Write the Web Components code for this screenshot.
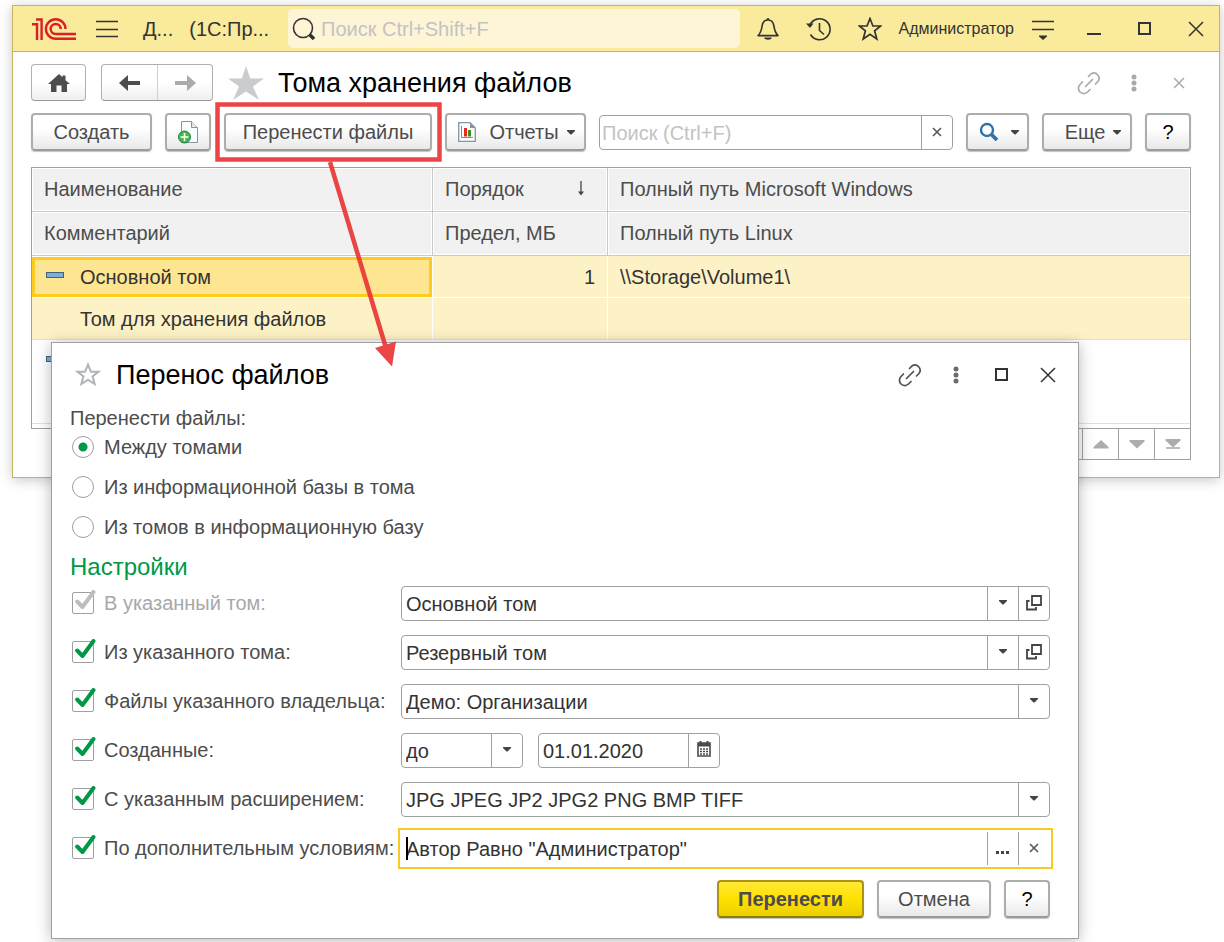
<!DOCTYPE html>
<html lang="ru">
<head>
<meta charset="utf-8">
<title>Тома хранения файлов</title>
<style>
  html, body { margin: 0; background: #fff; }
  body { font: 20px/24px "Liberation Sans", Arial, sans-serif; color: #4c4c4c; position: relative; min-height: 100vh; overflow: hidden; }
</style>
</head>
<body>
<volumes-window></volumes-window>
<transfer-dialog></transfer-dialog>
<callout-arrow></callout-arrow>

<script>
const ICONS = {
  logo: [46, 24, '<g fill="none" stroke="#db1f26" stroke-width="2.400"><path d="M4 2.500H9.600V23M0 7.200H5V23"/><path d="M33.500 12A9.800 9.800 0 1 0 23.700 21.800H44M28.700 12A5 5 0 1 0 23.700 17H44"/></g>'],
  burger: [22, 18, '<path d="M0 1.5H22M0 9.5H22M0 16.5H22" stroke="#333" stroke-width="1.6"/>'],
  search: [24, 24, '<circle cx="11" cy="11" r="9.5" fill="none" stroke="#333" stroke-width="1.6"/><path d="M17.5 17.5L22 22" stroke="#333" stroke-width="3.6"/>'],
  bell: [24, 24, '<path d="M2 18.6C5 16 5.5 13 6.200 8.500C6.800 5 9 3 12 3S17.200 5 17.800 8.500C18.500 13 19 16 22 18.600Z" fill="none" stroke="#333" stroke-width="1.600" stroke-linejoin="round"/><path d="M10.500 3a1.500 2 0 0 1 3 0zM8 20.500h8c-1 3-7 3-8 0z" fill="#333"/>'],
  history: [26, 24, '<path d="M4 8A10.500 10.500 0 1 1 4.500 17.500" fill="none" stroke="#333" stroke-width="1.600"/><path d="M0 6.500H7.500L4 11z" fill="#333"/><path d="M13.500 6V13.500L18 17.500" fill="none" stroke="#333" stroke-width="1.600"/>'],
  star: [24, 24, '<path d="M12 1.500L14.900 9H22.700L16.600 13.800L18.800 22L12 17.400L5.200 22L7.400 13.800L1.300 9H9.100Z" fill="none" stroke="#333" stroke-width="1.700"/>'],
  settings: [22, 22, '<path d="M0 3.500H22M0 11.500H22" stroke="#333" stroke-width="1.700"/><path d="M7 17.500H15V18.500L11 22L7 18.500z" fill="#333"/>'],
  minimize: [14, 12, '<path d="M0 11H14" stroke="#333" stroke-width="2"/>'],
  maximize: [14, 14, '<rect x="1" y="1" width="11" height="11" fill="none" stroke="#333" stroke-width="2"/>'],
  close: [16, 16, '<path d="M1 1L15 15M15 1L1 15" stroke="#333" stroke-width="1.500"/>'],
  closeGrey: [12, 12, '<path d="M1 1L11 11M11 1L1 11" stroke="#aaa" stroke-width="1.500"/>'],
  clear: [10, 10, '<path d="M1 1L9 9M9 1L1 9" stroke="#555" stroke-width="1.600"/>'],
  home: [22, 18, '<path d="M11 0L14.500 3.300V1.500H17.500V6.200L22 10H19V18H13.500V11.500H8.500V18H3V10H0Z" fill="#4d4d4d"/>'],
  back: [22, 16, '<path d="M0 8L9 0V6H21V10H9V16Z" fill="#4d4d4d"/>'],
  forward: [22, 16, '<path d="M22 8L13 0V6H1V10H13V16Z" fill="#ababab"/>'],
  starFilled: [36, 34, '<path d="M18 0L22.200 12.500H36L25 20.500L31 34L18 25.500L5 34L11 20.500L0 12.500H13.800Z" fill="#cbccce"/>'],
  starOutline: [26, 25, '<path d="M13 2.500L15.900 9.700H23.500L17.500 14.400L19.700 22L13 17.600L6.300 22L8.500 14.400L2.500 9.700H10.100Z" fill="none" stroke="#b0b5bc" stroke-width="2"/>'],
  link: [24, 24, '<g fill="none" stroke="#505050" stroke-width="1.700" stroke-linecap="round"><path d="M8.500 15.500L15.500 8.500"/><path d="M11.500 5.500L14 3A5.200 5.200 0 0 1 21 10.500L18.500 13"/><path d="M5.500 11L3 13.500A5.200 5.200 0 0 0 10.500 21L13 18.500"/></g>'],
  linkGrey: [24, 24, '<g fill="none" stroke="#aaa" stroke-width="1.700" stroke-linecap="round"><path d="M8.500 15.500L15.500 8.500"/><path d="M11.500 5.500L14 3A5.200 5.200 0 0 1 21 10.500L18.500 13"/><path d="M5.500 11L3 13.500A5.200 5.200 0 0 0 10.500 21L13 18.500"/></g>'],
  dots: [6, 18, '<g fill="#6b6b6b"><circle cx="3" cy="3" r="2.500"/><circle cx="3" cy="9" r="2.500"/><circle cx="3" cy="15" r="2.500"/></g>'],
  dotsGrey: [6, 18, '<g fill="#a8a8a8"><circle cx="3" cy="3" r="2.500"/><circle cx="3" cy="9" r="2.500"/><circle cx="3" cy="15" r="2.500"/></g>'],
  newDoc: [22, 24, '<path d="M4.500 1.500H14.500L20.500 7.500V22.500H4.500Z" fill="#fbfcfd" stroke="#8494a4"/><path d="M14.500 1.500V7.500H20.500" fill="#e4e9ee" stroke="#8494a4"/><circle cx="7.500" cy="17" r="6" fill="#49b54d" stroke="#21863b"/><path d="M3.500 17H11.500M7.500 13V21" stroke="#fff" stroke-width="1.600"/>'],
  report: [18, 20, '<path d="M.7.7H12L17.300 6V19.300H.7Z" fill="#fafcfd" stroke="#8494a4" stroke-width="1.300"/><path d="M12 .7V6H17.300" fill="#8494a4"/><path d="M3.500 4V15.500H15" fill="none" stroke="#888"/><rect x="6" y="6" width="3" height="8.500" fill="#e52b20"/><rect x="10" y="8" width="3" height="6.500" fill="#3c8f10"/>'],
  magnifier: [20, 20, '<circle cx="8" cy="8" r="6" fill="none" stroke="#2e72a8" stroke-width="2.400"/><path d="M12.500 12.500L18 18" stroke="#2e72a8" stroke-width="3.800"/>'],
  caret: [8, 5, '<path d="M0 0H8V1L4.500 4.500H3.500L0 1Z" fill="#444"/>'],
  open: [16, 16, '<path d="M6 1H15V10H6Z" fill="none" stroke="#444" stroke-width="1.800"/><path d="M3.500 6H1V14.500H10V12" fill="none" stroke="#444" stroke-width="1.800"/>'],
  calendar: [14, 18, '<path d="M1 2H13V15H1Z" fill="none" stroke="#4a4a4a" stroke-width="1.600"/><path d="M1 2H13V5.500H1Z" fill="#4a4a4a"/><path d="M3.500 0V3M10.500 0V3" stroke="#4a4a4a" stroke-width="2"/><path d="M3 8H11.500M3 10.500H11.500M3 13H11.500" stroke="#4a4a4a" stroke-width="1.500" stroke-dasharray="2 1"/>'],
  ellipsis: [14, 12, '<path d="M0 9H3V12H0ZM5 9H8V12H5ZM10 9H13V12H10Z" fill="#444"/>'],
  sort: [8, 15, '<path d="M4 0V12" stroke="#444" stroke-width="1.300"/><path d="M1 10.500H7L4 14.500Z" fill="#444"/>'],
  up: [16, 9, '<path d="M8 0L15.500 7V8.500H.5V7Z" fill="#adadad"/>'],
  down: [16, 9, '<path d="M8 8.500L15.500 1.500V0H.5V1.500Z" fill="#adadad"/>'],
  last: [16, 10, '<path d="M8 8.500L15.500 1.500V0H.5V1.500Z" fill="#adadad"/><path d="M1 9H15" stroke="#adadad" stroke-width="1.600"/>'],
  tick: [22, 20, '<path d="M3.200 11.500L8.500 17L19.500 2" fill="none" stroke="currentColor" stroke-width="4" stroke-linecap="round" stroke-linejoin="round"/>']
};

class UiIcon extends HTMLElement {
  constructor() {
    super();
    this.attachShadow({ mode: 'open' });
  }
  connectedCallback() {
    const [w, h, body] = ICONS[this.getAttribute('name')];
    this.shadowRoot.innerHTML = `
      <style>:host{display:inline-flex;flex:none} svg{display:block}</style>
      <svg width="${w}" height="${h}" viewBox="0 0 ${w} ${h}" aria-hidden="true">${body}</svg>`;
  }
}
customElements.define('ui-icon', UiIcon);

class PushButton extends HTMLElement {
  constructor() {
    super();
    this.attachShadow({ mode: 'open' }).innerHTML = `
      <style>
        :host{display:block;flex:none}
        button{display:flex;align-items:center;justify-content:center;width:100%;height:38px;margin:0 0 1px;padding:0;
          box-sizing:border-box;font:inherit;color:#4c4c4c;border:2px solid #adadad;border-bottom-color:#9b9b9b;border-radius:4px;
          background:linear-gradient(#fff 40%,#e9e9e9);box-shadow:0 1px 1px #c4c4c4}
        :host([primary]) button{font-weight:bold;border-color:#ab9412;border-bottom-color:#8f7b00;
          background:linear-gradient(#ffe838,#ffe100 50%,#ead000)}
        :host([help]) button{color:#000}
      </style>
      <button type="button"><slot></slot></button>`;
  }
  connectedCallback() {
    const label = this.getAttribute('label');
    if (label) this.shadowRoot.querySelector('button').setAttribute('aria-label', label);
  }
}
customElements.define('push-button', PushButton);

/* Borderless button that holds one icon. */
class IconButton extends HTMLElement {
  constructor() { super(); this.attachShadow({ mode: 'open' }); }
  connectedCallback() {
    this.shadowRoot.innerHTML = `
      <style>
        :host{display:block;flex:none;width:40px}
        button{display:flex;align-items:center;justify-content:center;width:100%;height:32px;margin:0;padding:0;border:0;background:none}
      </style>
      <button type="button" aria-label="${this.getAttribute('label')}"><ui-icon name="${this.getAttribute('icon')}"></ui-icon></button>`;
  }
}
customElements.define('icon-button', IconButton);

/* Bordered input: kind = select | text, buttons = icons of the trailing cells. */
class EntryField extends HTMLElement {
  constructor() { super(); this.attachShadow({ mode: 'open' }); }
  connectedCallback() {
    const kind = this.getAttribute('kind') || 'text';
    const value = this.getAttribute('value') || '';
    const label = this.getAttribute('label');
    const hint = this.getAttribute('placeholder') || '';
    const cells = (this.getAttribute('buttons') || '').split(' ').filter(Boolean);
    const names = { open: 'Открыть', calendar: 'Календарь', ellipsis: 'Выбрать', clear: 'Очистить' };
    const control = kind === 'select'
      ? `<select aria-label="${label}"><option>${value}</option></select><span class="cell arrow"><ui-icon name="caret"></ui-icon></span>`
      : `<input type="text" aria-label="${label}" placeholder="${hint}">`;
    this.shadowRoot.innerHTML = `
      <style>
        :host{display:block;min-width:0}
        .box{display:flex;position:relative;height:33px;border:1px solid #a0a0a0;border-radius:4px;background:#fff}
        .main{display:grid;grid-template-columns:1fr auto;flex:1;min-width:0}
        select,input{grid-row:1;grid-column:1/3;min-width:0;width:100%;height:33px;box-sizing:border-box;margin:0;border:0;outline:0;
          padding:0 4px;background:none;font:inherit;color:#333;appearance:none}
        input{padding:2px 4px 0}
        input::placeholder{color:#c3c3c3;opacity:1}
        .cell{display:flex;align-items:center;justify-content:center;width:31px;box-sizing:border-box;margin:0;padding:0 0 2px;
          border:0;border-left:1px solid #a0a0a0;background:none}
        .arrow{grid-row:1;grid-column:2;pointer-events:none}
        :host([placeholder]) input{padding-left:2px}
        :host([active]) .box{border-color:transparent}
        :host([active]) .box::before{content:"";position:absolute;inset:-4px;border:2px solid #f9ca24}
        :host([active]) .box::after{content:"";position:absolute;left:4px;top:5px;width:2px;height:23px;background:#000}
      </style>
      <div class="box"><div class="main">${control}</div>
        ${cells.map(c => `<button class="cell" type="button" aria-label="${names[c]}"><ui-icon name="${c}"></ui-icon></button>`).join('')}
      </div>`;
    if (kind !== 'select') this.shadowRoot.querySelector('input').value = value;
  }
}
customElements.define('entry-field', EntryField);

class CheckLabel extends HTMLElement {
  constructor() { super(); this.attachShadow({ mode: 'open' }); }
  connectedCallback() {
    this.shadowRoot.innerHTML = `
      <style>
        :host{display:block}
        label{display:flex;align-items:center;gap:10px;padding:0 0 2px 2px;color:#4c4c4c;white-space:nowrap}
        .mark{position:relative;width:22px;height:22px;flex:none;color:#009846}
        input{appearance:none;display:block;width:22px;height:22px;margin:0;box-sizing:border-box;border:1px solid #a0a0a0;border-radius:2px}
        ui-icon{position:absolute;left:2px;top:-2px;pointer-events:none}
        :host([disabled]) label{color:#a8a8a8}
        :host([disabled]) .mark{color:#bdbdbd}
      </style>
      <label><span class="mark"><input type="checkbox" checked ${this.hasAttribute('disabled') ? 'disabled' : ''}><ui-icon name="tick"></ui-icon></span><slot></slot></label>`;
  }
}
customElements.define('check-label', CheckLabel);

class VolumesTable extends HTMLElement {
  constructor() {
    super();
    this.attachShadow({ mode: 'open' }).innerHTML = `
      <style>
        :host{display:block}
        .frame{border:1px solid #a0a0a0;padding-bottom:4px}
        table{width:100%;table-layout:fixed;border-collapse:separate;border-spacing:0}
        col.name{width:401px} col.order{width:175px}
        th,td{box-sizing:border-box;padding:0 12px;text-align:left;font-weight:normal;white-space:nowrap}
        th{height:44px;padding-bottom:2px;background:#f1f1f1;border-right:1px solid #c9c9c9;border-bottom:1px solid #c9c9c9;box-shadow:inset 0 0 0 1px #fff}
        th:last-child,td:last-child{border-right:0}
        .sorted{display:flex;justify-content:space-between;align-items:center;padding-right:10px}
        td{height:42px;color:#333;background:#fdf1c6;border-right:1px solid #fff;border-bottom:1px solid #fff}
        td.num{text-align:right}
        td.name{padding-left:48px}
        tr.second td{border-bottom-color:#e0e0e0}
        tr.first td.item{padding-left:14px}
        .item div{display:flex;align-items:center;gap:16px}
        .item i{width:16px;height:4px;border:1px solid #426379;background:#7eaed8;margin-bottom:4px}
        td.current{background:#fee591;box-shadow:inset 0 0 0 3px #fbcb20;border-top:1px solid #fff}
        tbody.plain td{background:#fff}
        .pager{display:flex;justify-content:flex-end}
        .pager button{width:37px;height:32px;margin:-1px 0 0 -1px;padding:0;border:1px solid #a0a0a0;background:#fff;display:flex;align-items:center;justify-content:center}
      </style>
      <div class="frame">
        <table>
          <colgroup><col class="name"><col class="order"><col></colgroup>
          <thead>
            <tr><th>Наименование</th><th><div class="sorted">Порядок<ui-icon name="sort"></ui-icon></div></th><th>Полный путь Microsoft Windows</th></tr>
            <tr><th>Комментарий</th><th>Предел, МБ</th><th>Полный путь Linux</th></tr>
          </thead>
          <tbody>
            <tr class="first"><td class="item current"><div><i></i>Основной том</div></td><td class="num">1</td><td>\\\\Storage\\Volume1\\</td></tr>
            <tr class="second"><td class="name">Том для хранения файлов</td><td></td><td></td></tr>
          </tbody>
          <tbody class="plain">
            <tr class="first"><td class="item"><div><i></i></div></td><td></td><td></td></tr>
            <tr class="second"><td></td><td></td><td></td></tr>
          </tbody>
        </table>
      </div>
      <div class="pager">
        <button type="button" aria-label="В начало"></button>
        <button type="button" aria-label="Вверх"><ui-icon name="up"></ui-icon></button>
        <button type="button" aria-label="Вниз"><ui-icon name="down"></ui-icon></button>
        <button type="button" aria-label="В конец"><ui-icon name="last"></ui-icon></button>
      </div>`;
  }
}
customElements.define('volumes-table', VolumesTable);

class VolumesWindow extends HTMLElement {
  constructor() {
    super();
    this.attachShadow({ mode: 'open' }).innerHTML = `
      <style>
        :host{display:block;margin:5px 4px 0 12px;border:1px solid #c6b45e;background:#fff;box-shadow:0 2px 12px rgba(0,0,0,.22)}
        :host{position:relative}
        header{display:flex;align-items:center;height:45px;background:#faea9c;border-bottom:1px solid #c6b45e;padding:0 3px 0 19px;box-sizing:content-box}
        .menu{margin:0 16px 0 9px}
        .caption{display:flex;gap:16px;width:137px;color:#333;white-space:nowrap}
        .search{display:flex;align-items:center;gap:5px;flex:1;min-width:0;height:39px;margin:0 8px;padding-left:4px;border-radius:5px;background:#fdf5d6}
        .search input{flex:1;min-width:0;border:0;margin:0;padding:0;outline:0;background:none;font:inherit}
        input::placeholder{color:#c3c3c3;opacity:1}
        .tools{display:flex;align-items:center;gap:11px}
        .tools a{margin:0 -2px;color:#333;text-decoration:none;font-size:16px;white-space:nowrap}
        main{padding:12px 28px 17px 18px}
        .head{display:flex;align-items:center;height:37px}
        .nav{display:flex;border:1px solid #b0b0b0;border-bottom-color:#999;border-radius:4px;box-sizing:border-box;height:37px;background:linear-gradient(#fff 50%,#efefef)}
        .nav button{display:flex;align-items:center;justify-content:center;width:55px;margin:0;padding:0;border:0;background:none}
        .nav button + button{border-left:1px solid #d0d0d0}
        .home{margin-right:15px;width:55px}
        .home button{width:100%}
        h1{flex:1;margin:0 0 0 14px;font-size:27px;line-height:32px;font-weight:normal;color:#000;white-space:nowrap}
        .fav{margin-left:15px;width:36px}
        .links{display:flex;align-items:center;gap:5px;margin-right:-8px}
        .bar{display:flex;align-items:center;gap:13px;margin:12px 0 15px;height:39px}
        .bar entry-field{flex:1}
        .create{width:121px}.copy{width:46px}.move{width:208px}.reports{width:141px}.find{width:63px}.more{width:90px}.help{width:46px}
        .pack{display:flex;align-items:center}
        .reports .pack{gap:13px;padding-left:2px}
        .gap{margin-left:8px}
        .find .pack{gap:12px;padding-left:2px}
        .more .pack{gap:8px;padding-left:12px}
      </style>
      <header>
        <ui-icon name="logo"></ui-icon>
        <icon-button class="menu" icon="burger" label="Меню"></icon-button>
        <div class="caption"><span>Д...</span><span>(1С:Пр...</span></div>
        <div class="search"><ui-icon name="search"></ui-icon><input type="search" aria-label="Поиск" placeholder="Поиск Ctrl+Shift+F"></div>
        <div class="tools">
          <icon-button icon="bell" label="Оповещения"></icon-button>
          <icon-button icon="history" label="История"></icon-button>
          <icon-button icon="star" label="Избранное"></icon-button>
          <a href="#">Администратор</a>
          <icon-button icon="settings" label="Настройки"></icon-button>
          <icon-button icon="minimize" label="Свернуть"></icon-button>
          <icon-button icon="maximize" label="Развернуть"></icon-button>
          <icon-button icon="close" label="Закрыть окно"></icon-button>
        </div>
      </header>
      <main>
        <div class="head">
          <div class="nav home"><button type="button" aria-label="Домой"><ui-icon name="home"></ui-icon></button></div>
          <div class="nav"><button type="button" aria-label="Назад"><ui-icon name="back"></ui-icon></button><button type="button" aria-label="Вперед"><ui-icon name="forward"></ui-icon></button></div>
          <ui-icon class="fav" name="starFilled"></ui-icon>
          <h1>Тома хранения файлов</h1>
          <div class="links">
            <icon-button icon="linkGrey" label="Ссылка"></icon-button>
            <icon-button icon="dotsGrey" label="Еще"></icon-button>
            <icon-button icon="closeGrey" label="Закрыть"></icon-button>
          </div>
        </div>
        <div class="bar">
          <push-button class="create">Создать</push-button>
          <push-button class="copy" label="Скопировать"><ui-icon name="newDoc"></ui-icon></push-button>
          <push-button class="move">Перенести файлы</push-button>
          <push-button class="reports"><span class="pack"><ui-icon name="report"></ui-icon>Отчеты</span><ui-icon class="gap" name="caret"></ui-icon></push-button>
          <entry-field label="Поиск" placeholder="Поиск (Ctrl+F)" buttons="clear"></entry-field>
          <push-button class="find" label="Найти"><span class="pack"><ui-icon name="magnifier"></ui-icon><ui-icon name="caret"></ui-icon></span></push-button>
          <push-button class="more"><span class="pack">Еще<ui-icon name="caret"></ui-icon></span></push-button>
          <push-button class="help" help>?</push-button>
        </div>
        <volumes-table></volumes-table>
      </main>`;
  }
}
customElements.define('volumes-window', VolumesWindow);

class TransferDialog extends HTMLElement {
  constructor() {
    super();
    this.attachShadow({ mode: 'open' }).innerHTML = `
      <style>
        :host{display:block;position:absolute;left:51px;right:145px;top:342px;box-sizing:border-box;border:1px solid #a0a0a0;background:#fff;
          box-shadow:0 2px 14px rgba(0,0,0,.28)}
        header{display:flex;align-items:center;height:63px;padding:0 7px 0 23px}
        h1{flex:1;margin:0 0 0 15px;font-size:27px;line-height:32px;font-weight:normal;color:#000}
        header icon-button{width:46px}
        form{margin:0;padding:0 28px 19px 18px}
        fieldset{border:0;margin:0;padding:0;min-width:0}
        legend{padding:0;display:block;line-height:24px}
        .radio{display:flex;align-items:center;gap:10px;height:40px;padding-left:2px}
        .radio input{appearance:none;width:22px;height:22px;box-sizing:border-box;margin:0;border:1px solid #a0a0a0;border-radius:50%}
        .radio input:checked{background:radial-gradient(circle,#009846 4px,transparent 5px)}
        .radios{margin-top:-6px;padding-top:3px}
        h2{margin:6px 0 5px;font-size:24px;line-height:28px;font-weight:normal;color:#009846}
        .rows{display:grid;gap:14px}
        .row{display:grid;grid-template-columns:331px 1fr;align-items:center;height:35px}
        .pair{display:flex;gap:15px}
        .when{width:122px}.date{width:182px}
        footer{display:flex;justify-content:flex-end;gap:13px;margin-top:14px}
        .go{width:147px}.cancel{width:114px}.help{width:46px}
      </style>
      <header>
        <ui-icon name="starOutline"></ui-icon>
        <h1>Перенос файлов</h1>
        <icon-button icon="link" label="Ссылка"></icon-button>
        <icon-button icon="dots" label="Еще"></icon-button>
        <icon-button icon="maximize" label="Развернуть"></icon-button>
        <icon-button icon="close" label="Закрыть"></icon-button>
      </header>
      <form>
        <fieldset>
          <legend>Перенести файлы:</legend>
          <div class="radios">
            <label class="radio"><input type="radio" name="way" checked>Между томами</label>
            <label class="radio"><input type="radio" name="way">Из информационной базы в тома</label>
            <label class="radio"><input type="radio" name="way">Из томов в информационную базу</label>
          </div>
        </fieldset>
        <h2>Настройки</h2>
        <div class="rows">
          <div class="row"><check-label disabled>В указанный том:</check-label><entry-field kind="select" label="В указанный том" value="Основной том" buttons="open"></entry-field></div>
          <div class="row"><check-label>Из указанного тома:</check-label><entry-field kind="select" label="Из указанного тома" value="Резервный том" buttons="open"></entry-field></div>
          <div class="row"><check-label>Файлы указанного владельца:</check-label><entry-field kind="select" label="Файлы указанного владельца" value="Демо: Организации"></entry-field></div>
          <div class="row"><check-label>Созданные:</check-label><div class="pair"><entry-field class="when" kind="select" label="Созданные" value="до"></entry-field><entry-field class="date" label="Дата" value="01.01.2020" buttons="calendar"></entry-field></div></div>
          <div class="row"><check-label>С указанным расширением:</check-label><entry-field kind="select" label="С указанным расширением" value="JPG JPEG JP2 JPG2 PNG BMP TIFF"></entry-field></div>
          <div class="row"><check-label>По дополнительным условиям:</check-label><entry-field active label="По дополнительным условиям" value='Автор Равно "Администратор"' buttons="ellipsis clear"></entry-field></div>
        </div>
        <footer>
          <push-button class="go" primary>Перенести</push-button>
          <push-button class="cancel">Отмена</push-button>
          <push-button class="help" help>?</push-button>
        </footer>
      </form>`;
  }
}
customElements.define('transfer-dialog', TransferDialog);

/* Red frame round the button, with an arrow to the dialog that it opens. */
class CalloutArrow extends HTMLElement {
  constructor() {
    super();
    this.attachShadow({ mode: 'open' }).innerHTML = `
      <style>:host{display:block;position:absolute;left:215px;top:102px;pointer-events:none} svg{display:block}</style>
      <svg width="230" height="266" viewBox="0 0 230 266" aria-hidden="true">
        <g opacity=".93"><rect x="2.500" y="2.500" width="222" height="55" fill="none" stroke="#ea3737" stroke-width="4.500"/>
        <path d="M115 60L171 246" stroke="#ea3737" stroke-width="4.500"/>
        <path d="M160 246L181 239.500L177 264.500Z" fill="#ea3737"/></g>
      </svg>`;
  }
}
customElements.define('callout-arrow', CalloutArrow);
</script>
</body>
</html>
